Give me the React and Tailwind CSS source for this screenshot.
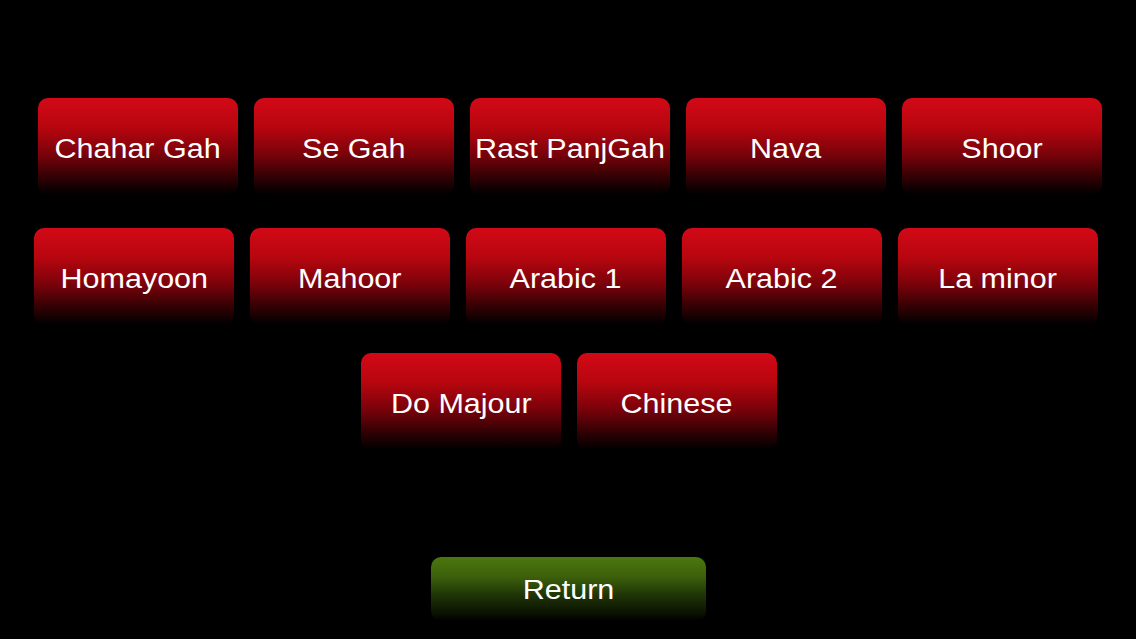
import React from "react";

const RedBtn = ({ label }) => (
  <div className="w-[200px] h-[97px] rounded-[10px] bg-[linear-gradient(to_bottom,#d20916_0%,#b8060f_30%,#7a020a_58%,#300104_82%,#0a0001_96%,#000000_100%)] flex items-start justify-center pt-[36px]">
    <span className="text-white text-[27px] leading-[30px] inline-block scale-x-[1.13] [font-family:'Liberation_Sans',Arial,sans-serif]">
      {label}
    </span>
  </div>
);

export default function App() {
  const row1 = ["Chahar Gah", "Se Gah", "Rast PanjGah", "Nava", "Shoor"];
  const row2 = ["Homayoon", "Mahoor", "Arabic 1", "Arabic 2", "La minor"];
  const row3 = ["Do Majour", "Chinese"];
  return (
    <div className="w-[1136px] h-[639px] bg-black overflow-hidden flex flex-col">
      <div className="flex gap-[16px] pl-[38px] pt-[98px]">
        {row1.map((l) => (
          <RedBtn key={l} label={l} />
        ))}
      </div>
      <div className="flex gap-[16px] pl-[34px] mt-[33px]">
        {row2.map((l) => (
          <RedBtn key={l} label={l} />
        ))}
      </div>
      <div className="flex gap-[16px] pl-[361px] mt-[28px]">
        {row3.map((l) => (
          <RedBtn key={l} label={l} />
        ))}
      </div>
      <div className="flex pl-[431px] mt-[107px]">
        <div className="w-[275px] h-[64px] rounded-[10px] bg-[linear-gradient(to_bottom,#4c770f_0%,#3d610b_30%,#1f3406_60%,#0a1202_88%,#000000_100%)] flex items-start justify-center pt-[18px]">
          <span className="text-white text-[27px] leading-[30px] inline-block scale-x-[1.13] [font-family:'Liberation_Sans',Arial,sans-serif]">
            Return
          </span>
        </div>
      </div>
    </div>
  );
}
